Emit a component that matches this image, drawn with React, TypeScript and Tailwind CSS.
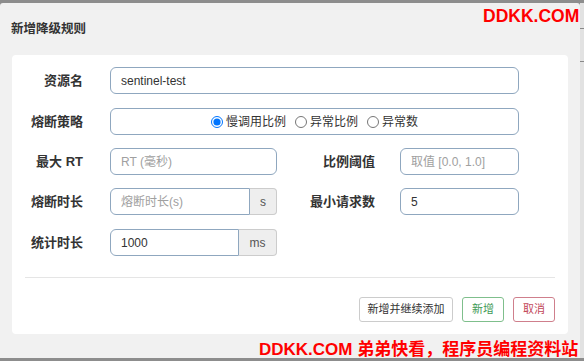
import React from "react";

const font = { fontFamily: '"Liberation Sans", "Noto Sans CJK SC", sans-serif' };

function Label({ children, w }: { children: React.ReactNode; w: string }) {
  return (
    <div className={`${w} shrink-0 text-right text-[13px] font-bold text-[#333] leading-[27px]`}>
      {children}
    </div>
  );
}

export default function App() {
  const inputCls =
    "h-[27px] border border-[#8fa7bf] rounded-[6px] px-[10px] text-[12px] text-[#333] placeholder:text-[#a0a0a0] outline-none bg-white";
  return (
    <div
      className="relative w-[584px] h-[361px] overflow-hidden bg-[#8d8d8d] flex"
      style={font}
    >
      <div className="mt-[3px] w-[580px] h-[355px] bg-[#f1f1f1] rounded-t-[3px] flex flex-col">
        <div className="h-[52px] flex items-center pl-[11px] pt-[1px] text-[12.5px] font-bold text-[#333]">
          新增降级规则
        </div>
        <div className="ml-[12px] w-[556px] h-[279px] bg-white rounded-[4px] flex flex-col pt-[12px]">
          {/* row 1 */}
          <div className="flex items-center">
            <Label w="w-[71px]">资源名</Label>
            <input className={`${inputCls} ml-[27px] w-[409px]`} defaultValue="sentinel-test" />
          </div>
          {/* row 2 */}
          <div className="flex items-center mt-[14px]">
            <Label w="w-[71px]">熔断策略</Label>
            <div className="ml-[27px] w-[409px] h-[27px] border border-[#8fa7bf] rounded-[6px] flex items-center justify-center text-[12px] text-[#333] gap-[9px]">
              <label className="flex items-center gap-[3px]">
                <input type="radio" name="s" defaultChecked className="m-0 w-[12px] h-[12px]" />
                慢调用比例
              </label>
              <label className="flex items-center gap-[3px]">
                <input type="radio" name="s" className="m-0 w-[12px] h-[12px]" />
                异常比例
              </label>
              <label className="flex items-center gap-[3px]">
                <input type="radio" name="s" className="m-0 w-[12px] h-[12px]" />
                异常数
              </label>
            </div>
          </div>
          {/* row 3 */}
          <div className="flex items-center mt-[13px]">
            <Label w="w-[71px]">最大 RT</Label>
            <input className={`${inputCls} ml-[27px] w-[167px]`} placeholder="RT (毫秒)" />
            <Label w="w-[98px]">比例阈值</Label>
            <input className={`${inputCls} ml-[25px] w-[119px]`} placeholder="取值 [0.0, 1.0]" />
          </div>
          {/* row 4 */}
          <div className="flex items-center mt-[13px]">
            <Label w="w-[71px]">熔断时长</Label>
            <div className="ml-[27px] w-[167px] flex h-[27px]">
              <input
                className="h-[27px] w-[140px] border border-[#8fa7bf] rounded-l-[6px] px-[10px] text-[12px] text-[#333] placeholder:text-[#a0a0a0] outline-none"
                placeholder="熔断时长(s)"
              />
              <div className="w-[27px] h-[27px] border border-l-0 border-[#ccc] bg-[#eee] rounded-r-[4px] flex items-center justify-center text-[12px] text-[#555]">
                s
              </div>
            </div>
            <Label w="w-[98px]">最小请求数</Label>
            <input className={`${inputCls} ml-[25px] w-[119px]`} defaultValue="5" />
          </div>
          {/* row 5 */}
          <div className="flex items-center mt-[14px]">
            <Label w="w-[71px]">统计时长</Label>
            <div className="ml-[27px] w-[167px] flex h-[27px]">
              <input
                className="h-[27px] w-[129px] border border-[#8fa7bf] rounded-l-[6px] px-[10px] text-[12px] text-[#333] outline-none"
                defaultValue="1000"
              />
              <div className="w-[38px] h-[27px] border border-l-0 border-[#ccc] bg-[#eee] rounded-r-[4px] flex items-center justify-center text-[12px] text-[#555]">
                ms
              </div>
            </div>
          </div>
          <div className="mx-[13px] mt-[21px] h-[1px] bg-[#e5e5e5]" />
          <div className="flex justify-end gap-[9px] mr-[13px] mt-[19px] text-[11px]">
            <button className="h-[25px] w-[94px] border border-[#ccc] rounded-[3px] bg-white text-[#333]">
              新增并继续添加
            </button>
            <button className="h-[25px] w-[42px] border border-[#7fbf8c] rounded-[3px] bg-white text-[#3e9a55]">
              新增
            </button>
            <button className="h-[25px] w-[42px] border border-[#cf7f8c] rounded-[3px] bg-white text-[#c2475a]">
              取消
            </button>
          </div>
        </div>
      </div>
      <div className="mt-[3px] w-[4px] h-[355px] bg-[#e2e2e2] flex flex-col">
        <div className="mt-[25px] h-[1px] bg-[#888]" />
        <div className="mt-[32px] h-[1px] bg-[#888]" />
      </div>
      <div className="absolute left-[483px] top-[5px] text-[17.5px] font-bold text-[#ff0000] leading-[22px]">
        DDKK.COM
      </div>
      <div className="absolute left-[259px] top-[339px] text-[17px] font-bold text-[#ff0000] leading-[22px] whitespace-nowrap">
        DDKK.COM 弟弟快看，程序员编程资料站
      </div>
    </div>
  );
}
